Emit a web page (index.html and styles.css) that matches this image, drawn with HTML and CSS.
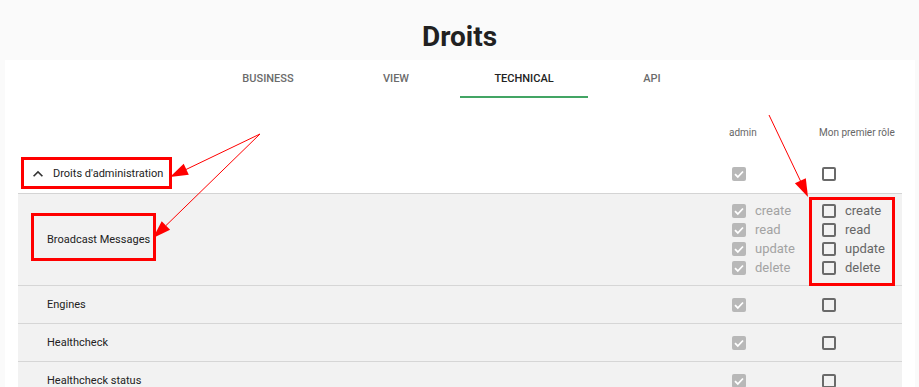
FILE: index.html
```html
<!DOCTYPE html>
<html lang="fr">
<head>
    <meta charset="UTF-8">
    <title>Droits</title>
    <link rel="stylesheet" href="styles.css">
</head>
<body>
    <header class="page-head">
        <h1>Droits</h1>
    </header>

    <div class="card">
        <nav class="tabs">
            <div class="tab">Business</div>
            <div class="tab">View</div>
            <div class="tab active">Technical</div>
            <div class="tab">API</div>
        </nav>

        <div class="rights">
            <div class="row head">
                <div></div>
                <div class="col-title">admin</div>
                <div class="col-title">Mon premier rôle</div>
            </div>

            <div class="row group">
                <div class="name">
                    <svg class="chevron" viewBox="0 0 24 24" width="20" height="20"><path d="M7.41 15.41L12 10.83l4.59 4.58L18 14l-6-6-6 6z"/></svg>
                    Droits d'administration
                </div>
                <div class="cell"><span class="cb on"></span></div>
                <div class="cell"><span class="cb"></span></div>
            </div>

            <div class="row item multi">
                <div class="name">Broadcast Messages</div>
                <div class="cell">
                    <div class="perm off"><span class="cb on"></span>create</div>
                    <div class="perm off"><span class="cb on"></span>read</div>
                    <div class="perm off"><span class="cb on"></span>update</div>
                    <div class="perm off"><span class="cb on"></span>delete</div>
                </div>
                <div class="cell">
                    <div class="perm"><span class="cb"></span>create</div>
                    <div class="perm"><span class="cb"></span>read</div>
                    <div class="perm"><span class="cb"></span>update</div>
                    <div class="perm"><span class="cb"></span>delete</div>
                </div>
            </div>

            <div class="row item">
                <div class="name">Engines</div>
                <div class="cell"><span class="cb on"></span></div>
                <div class="cell"><span class="cb"></span></div>
            </div>

            <div class="row item">
                <div class="name">Healthcheck</div>
                <div class="cell"><span class="cb on"></span></div>
                <div class="cell"><span class="cb"></span></div>
            </div>

            <div class="row item">
                <div class="name">Healthcheck status</div>
                <div class="cell"><span class="cb on"></span></div>
                <div class="cell"><span class="cb"></span></div>
            </div>
        </div>
    </div>

    <!-- red annotations drawn over the screenshot -->
    <svg class="notes" width="919" height="387" viewBox="0 0 919 387">
        <g fill="none" stroke="#f00">
            <rect x="22.5" y="158.5" width="148" height="29" stroke-width="3"/>
            <rect x="32.5" y="214.5" width="122" height="45" stroke-width="3"/>
            <rect x="810.5" y="198.5" width="83" height="86" stroke-width="3"/>
            <line x1="260" y1="134" x2="186" y2="169.5" stroke-width="1"/>
            <line x1="260" y1="134" x2="166" y2="225.5" stroke-width="1"/>
            <line x1="769" y1="115" x2="800.5" y2="181" stroke-width="1"/>
        </g>
        <g fill="#f00">
            <polygon points="170,177 183.7,163.8 188.8,174.7"/>
            <polygon points="153,238 161.7,221.2 170.1,229.8"/>
            <polygon points="808,197 794.9,183.3 805.8,178.2"/>
        </g>
    </svg>
</body>
</html>
```

FILE: styles.css
```css
* {
    margin: 0;
    padding: 0;
    box-sizing: border-box;
}
body {
    position: relative;
    background-color: #fafafa;
    font-family: Roboto, 'Liberation Sans', sans-serif;
    color: #222;
}
.page-head {
    height: 60px;
    padding-top: 21px;
    text-align: center;
}
h1 {
    font-size: 28px;
    line-height: 32px;
    font-weight: 700;
    color: #212121;
}
.card {
    background: #fff;
    margin: 0 4px 0 5px;
    padding: 0 13px 40px;
}
.tabs {
    display: flex;
    justify-content: center;
}
.tab {
    width: 128px;
    height: 38px;
    line-height: 38px;
    text-align: center;
    font-size: 11px;
    font-weight: 500;
    text-transform: uppercase;
    color: #6b6b6b;
    border-bottom: 2px solid transparent;
}
.tab.active {
    color: #222;
    border-bottom-color: #43a564;
}
.rights {
    font-size: 11px;
}
.row {
    display: grid;
    grid-template-columns: 1fr 90px 83px;
    align-items: center;
}
.head {
    height: 52px;
    align-items: start;
    padding-top: 29px;
}
.col-title {
    font-size: 10px;
    line-height: 12px;
    color: #666;
}
.group {
    height: 44px;
    padding-top: 4px;
    border-bottom: 1px solid #d4d4d4;
}
.group .name {
    display: flex;
    align-items: center;
    gap: 5px;
    padding-left: 10px;
}
.chevron {
    fill: #333;
}
.item {
    height: 38px;
    background: #f2f2f2;
    border-bottom: 1px solid #d6d6d6;
}
.item.multi {
    height: auto;
    padding: 7px 0 8px;
}
.name {
    padding-left: 29px;
    color: #222;
}
.cell {
    padding-left: 3px;
}
.cell > .cb {
    display: block;
}
.perm {
    display: flex;
    align-items: center;
    gap: 9px;
    height: 19px;
    font-size: 13px;
    color: #666;
}
.perm.off {
    color: #a3a3a3;
}
.cb {
    width: 14px;
    height: 14px;
    flex: none;
    border: 2px solid #6a6a6a;
    border-radius: 2px;
    background: #fff;
}
.cb.on {
    border: none;
    background: #b8b8b8 url("data:image/svg+xml,%3Csvg xmlns='http://www.w3.org/2000/svg' viewBox='0 0 14 14'%3E%3Cpath d='M3 7.2l2.8 2.8L11 4.5' fill='none' stroke='%23fff' stroke-width='1.8'/%3E%3C/svg%3E") center no-repeat;
}
.item .cb:not(.on), .group .cb:not(.on) {
    background: transparent;
}
.notes {
    position: absolute;
    top: 0;
    left: 0;
    pointer-events: none;
}
```
